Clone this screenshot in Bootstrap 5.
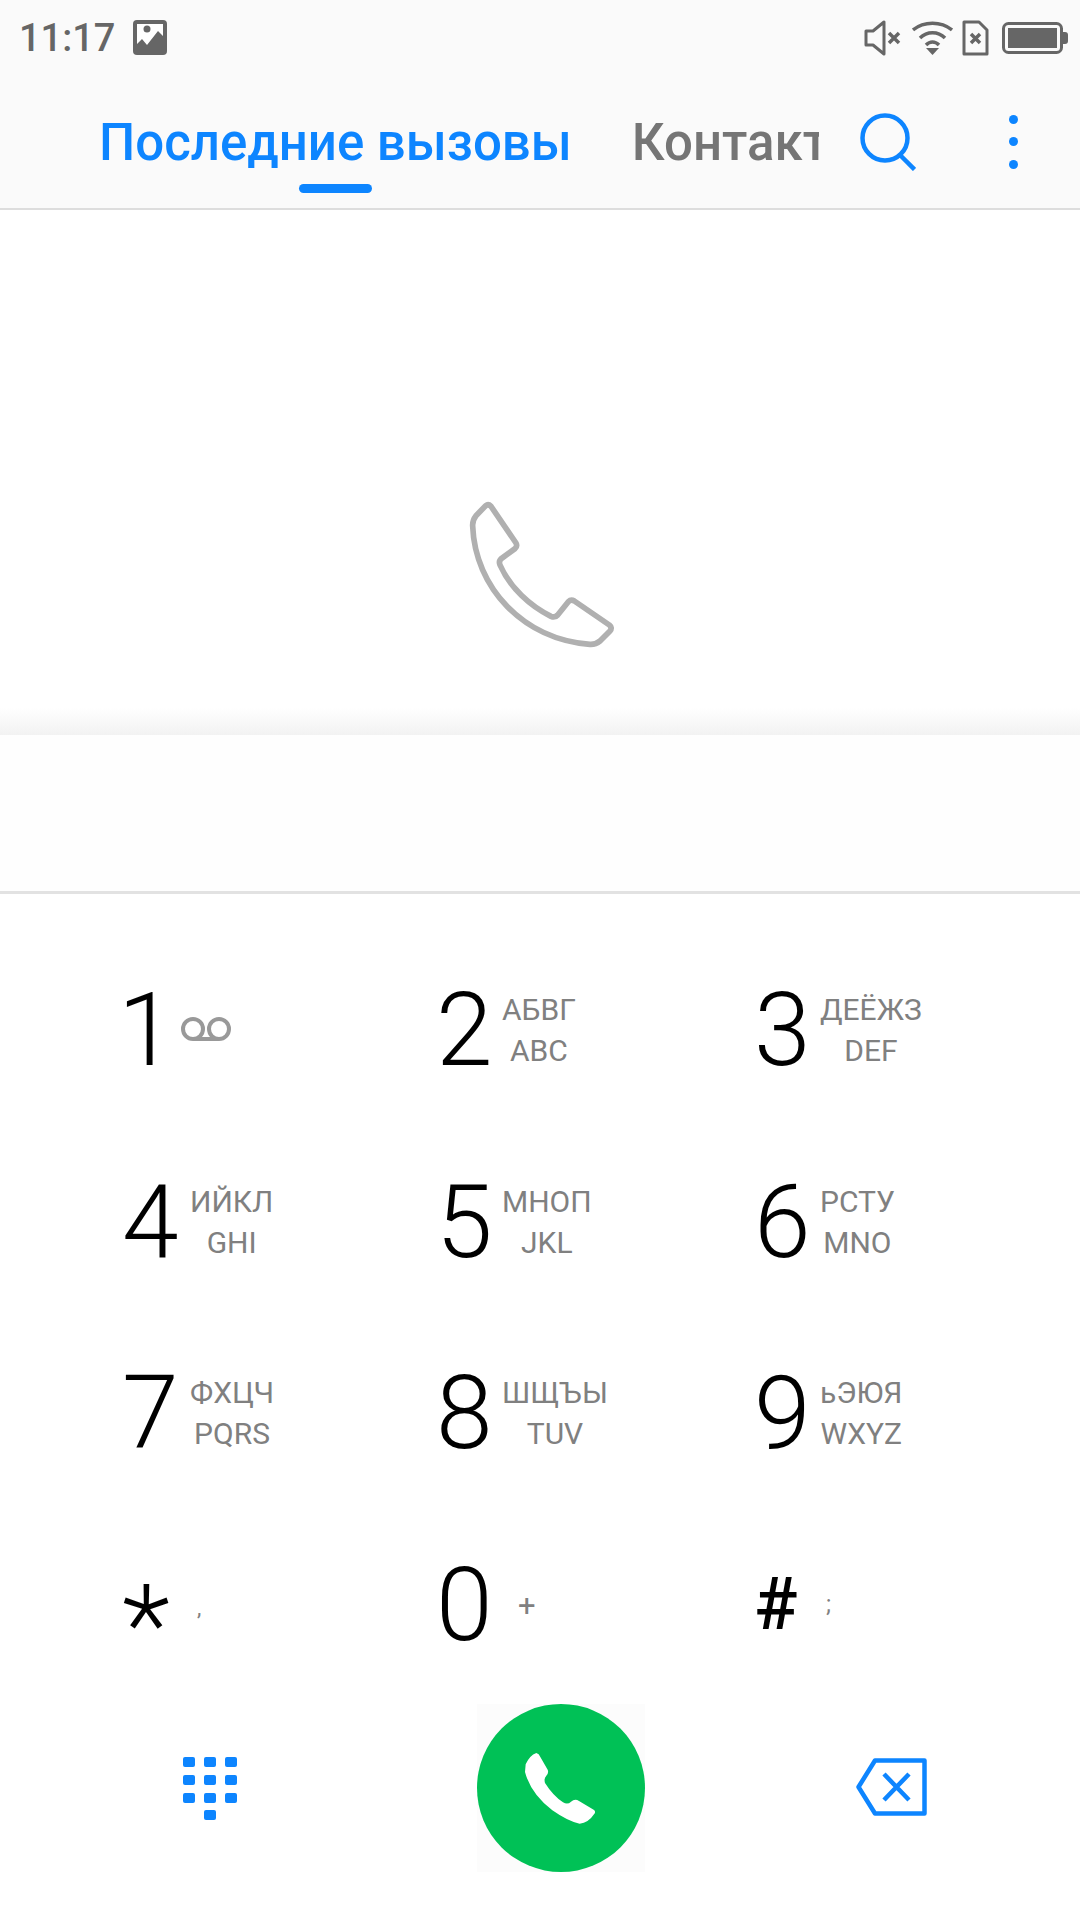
<!DOCTYPE html>
<html lang="ru">
<head>
    <meta charset="UTF-8">
    <title>Телефон</title>
    <meta name="viewport" content="width=device-width, initial-scale=1">
    <link href="https://cdn.jsdelivr.net/npm/bootstrap@5.3.2/dist/css/bootstrap.min.css" rel="stylesheet">
    <style>
        html, body { margin: 0; background: #fff; font-family: Roboto, "Liberation Sans", sans-serif; }
        .phone-page { width: 1080px; height: 1920px; overflow: hidden; }

        .top-head { height: 210px; background: #fafafa; border-bottom: 2px solid #ddd; }
        .status-row { height: 75px; padding: 0 12px 0 19px; }
        .status-time { font-size: 38px; font-weight: 500; line-height: 1; color: #666; }
        .status-icons { gap: 9px; }
        .status-left { gap: 18px; }
        .tab-row { height: 133px; }
        .tab-clip { width: 819px; padding-left: 99px; overflow: hidden; white-space: nowrap; flex-shrink: 0; }
        .tab-item { font-size: 51px; font-weight: 500; line-height: 56px; color: #757575; padding-top: 40px; }
        .tab-item.is-active { color: #0d85ff; margin-right: 60px; }
        .tab-mark { width: 73px; height: 9px; border-radius: 5px; background: #0d85ff; margin-top: 13px; }
        .search-btn { margin-left: 41px; }
        .dots-btn { margin-left: 93px; gap: 13.5px; }
        .dots-btn span { width: 9px; height: 9px; border-radius: 50%; background: #0d85ff; }

        .empty-area { height: 525px; padding: 261px 20px 0 0; background: linear-gradient(#fff 498px, #f2f2f2 525px); }
        .number-area { height: 159px; background: #fefefe; border-bottom: 3px solid #e2e2e2; }

        .dial-grid { grid-template-columns: 318px 318px 1fr; grid-auto-rows: 100px; row-gap: 91.7px; padding: 86px 0 0 118px; }
        .dial-key { color: #000; }
        .dial-num { width: 56px; font-size: 102px; font-weight: 300; line-height: 100px; text-align: center; flex-shrink: 0; }
        .dial-num.nudge-right { padding-left: 4px; }
        .dial-num.nudge-left { padding-right: 4px; }
        .dial-sub { font-size: 30px; line-height: 41px; color: #808080; text-align: center; margin-top: 9px; }
        .dial-key:nth-child(3n+1) .dial-sub { margin-left: 16px; }
        .dial-key:nth-child(3n+2) .dial-sub { margin-left: 10px; }
        .dial-key:nth-child(3n) .dial-sub { margin-left: 10px; }
        .dial-voicemail { margin: 37px 0 0 7px; }
        .dial-star { font-size: 112px; padding-top: 20px; }
        .dial-hash { font-size: 72px; font-weight: 500; margin-left: -6px; }
        .dial-sub.sub-comma { font-size: 22px; margin-left: 23px !important; margin-top: 32px; }
        .dial-sub.sub-plus { font-size: 31px; margin-left: 26px !important; margin-top: 30px; }
        .dial-sub.sub-semi { font-size: 24px; margin-left: 22px !important; margin-top: 29px; }

        .action-row { margin-top: 49px; padding-left: 183px; }
        .pad-btn { width: 54px; }
        .call-btn { width: 168px; height: 168px; margin-left: 240px; background: #fcfcfc; }
        .call-circle { width: 168px; height: 168px; background: #00c156; }
        .erase-btn { margin: -2px 0 0 211px; }
    </style>
</head>

<body>

<div class="phone-page d-flex flex-column">
    <header class="top-head">
        <div class="status-row d-flex align-items-center justify-content-between">
            <div class="status-left d-flex align-items-center">
                <span class="status-time">11:17</span>
                <svg width="34" height="35" viewBox="0 0 34 35">
                    <rect width="34" height="35" rx="4" fill="#666"/>
                    <path d="M4 4H30V16L25 11L14 25L9 19L4 24Z" fill="#fff"/>
                    <circle cx="14" cy="9" r="3.5" fill="#666"/>
                </svg>
            </div>
            <div class="status-icons d-flex align-items-center">
                <svg width="39" height="36" viewBox="0 0 39 36" fill="none" stroke="#666" stroke-width="3" stroke-linejoin="round">
                    <path d="M2 11H9L20 2V34L9 25H2Z"/>
                    <path d="M25 13L35 23M35 13L25 23" stroke-width="3.5"/>
                </svg>
                <svg width="41" height="34" viewBox="0 0 41 34" fill="none" stroke="#666" stroke-width="3.5">
                    <path d="M1 9C12 0 29 0 40 9"/>
                    <path d="M8 17C15 10 26 10 33 17"/>
                    <path d="M14 24C18 20 23 20 27 24"/>
                    <path d="M14 27H27L20.5 34Z" fill="#666" stroke="none"/>
                </svg>
                <svg width="31" height="36" viewBox="0 0 31 36" fill="none" stroke="#666" stroke-width="3">
                    <path d="M2 2H17L25 10V34H2Z" stroke-linejoin="round"/>
                    <path d="M9 14L18 23M18 14L9 23" stroke-width="3.5"/>
                </svg>
                <svg width="66" height="32" viewBox="0 0 66 32">
                    <rect x="1.5" y="1.5" width="58" height="29" rx="5" fill="none" stroke="#666" stroke-width="3"/>
                    <rect x="6" y="6" width="49" height="20" fill="#666"/>
                    <path d="M61 10H63Q66 10 66 13V19Q66 22 63 22H61Z" fill="#666"/>
                </svg>
            </div>
        </div>
        <div class="tab-row d-flex align-items-start">
            <nav class="tab-clip d-flex">
                <div class="tab-item is-active d-flex flex-column align-items-center">
                    <span>Последние вызовы</span>
                    <div class="tab-mark"></div>
                </div>
                <div class="tab-item">Контакты</div>
            </nav>
            <svg class="search-btn align-self-center" width="56" height="58" viewBox="0 0 56 58" fill="none" stroke="#0d85ff" stroke-width="4.5">
                <circle cx="25" cy="25" r="22.5"/>
                <path d="M40 42L54.5 56.5"/>
            </svg>
            <div class="dots-btn align-self-center d-flex flex-column">
                <span></span><span></span><span></span>
            </div>
        </div>
    </header>

    <section class="empty-area d-flex justify-content-center">
        <svg width="220" height="200" viewBox="0 0 660 600" fill="none" stroke="#b0b0b0" stroke-width="17" stroke-linejoin="round">
            <path d="M197 104Q205 98 213 106L288 216Q293 226 285 233L245 262Q235 270 240 282C270 350 330 405 393 436Q405 441 413 432L445 392Q453 384 463 390L568 462Q578 470 570 480L540 510Q527 521 510 520C310 505 165 350 158 165Q157 148 168 134Z"/>
        </svg>
    </section>

    <section class="number-area"></section>

    <section class="dial-grid d-grid">
        <div class="dial-key d-flex">
            <div class="dial-num nudge-left">1</div>
            <svg class="dial-voicemail" width="50" height="24" viewBox="0 0 50 24" fill="none" stroke="#999" stroke-width="4">
                <circle cx="12" cy="12" r="10"/>
                <circle cx="38" cy="12" r="10"/>
                <path d="M12 22H38"/>
            </svg>
        </div>
        <div class="dial-key d-flex"><div class="dial-num">2</div><div class="dial-sub">АБВГ<br>ABC</div></div>
        <div class="dial-key d-flex"><div class="dial-num">3</div><div class="dial-sub">ДЕЁЖЗ<br>DEF</div></div>
        <div class="dial-key d-flex"><div class="dial-num nudge-right">4</div><div class="dial-sub">ИЙКЛ<br>GHI</div></div>
        <div class="dial-key d-flex"><div class="dial-num nudge-left">5</div><div class="dial-sub">МНОП<br>JKL</div></div>
        <div class="dial-key d-flex"><div class="dial-num">6</div><div class="dial-sub">РСТУ<br>MNO</div></div>
        <div class="dial-key d-flex"><div class="dial-num nudge-right">7</div><div class="dial-sub">ФХЦЧ<br>PQRS</div></div>
        <div class="dial-key d-flex"><div class="dial-num">8</div><div class="dial-sub">ШЩЪЫ<br>TUV</div></div>
        <div class="dial-key d-flex"><div class="dial-num">9</div><div class="dial-sub">ьЭЮЯ<br>WXYZ</div></div>
        <div class="dial-key d-flex"><div class="dial-num dial-star">*</div><div class="dial-sub sub-comma">,</div></div>
        <div class="dial-key d-flex"><div class="dial-num">0</div><div class="dial-sub sub-plus">+</div></div>
        <div class="dial-key d-flex"><div class="dial-num dial-hash">#</div><div class="dial-sub sub-semi">;</div></div>
    </section>

    <section class="action-row d-flex align-items-center">
        <svg class="pad-btn" width="54" height="63" viewBox="0 0 54 63" fill="#0d85ff">
            <rect x="0" y="0" width="12" height="10" rx="2"/><rect x="21" y="0" width="12" height="10" rx="2"/><rect x="42" y="0" width="12" height="10" rx="2"/>
            <rect x="0" y="18" width="12" height="10" rx="2"/><rect x="21" y="18" width="12" height="10" rx="2"/><rect x="42" y="18" width="12" height="10" rx="2"/>
            <rect x="0" y="36" width="12" height="10" rx="2"/><rect x="21" y="36" width="12" height="10" rx="2"/><rect x="42" y="36" width="12" height="10" rx="2"/>
            <rect x="21" y="53" width="12" height="10" rx="2"/>
        </svg>
        <div class="call-btn">
            <div class="call-circle rounded-circle d-flex align-items-center justify-content-center">
                <svg width="74" height="72" viewBox="195 185 222 216" fill="#fff">
                    <path d="M200 222Q212 195 232 188Q240 190 244 200L266 238Q270 248 262 256Q254 264 258 278Q282 316 312 336Q326 344 336 334Q348 324 360 332L404 358Q412 364 405 372Q388 398 362 400Q330 395 280 360Q215 310 198 245Z"/>
                </svg>
            </div>
        </div>
        <svg class="erase-btn" width="71" height="58" viewBox="0 0 71 58" fill="none" stroke="#0d85ff" stroke-width="4.5" stroke-linejoin="round">
            <path d="M19 2.5H68.5V55.5H19L2.5 29Z"/>
            <path d="M28 16L53 42M53 16L28 42"/>
        </svg>
    </section>
</div>

<script src="https://cdn.jsdelivr.net/npm/bootstrap@5.3.2/dist/js/bootstrap.bundle.min.js"></script>
</body>
</html>
